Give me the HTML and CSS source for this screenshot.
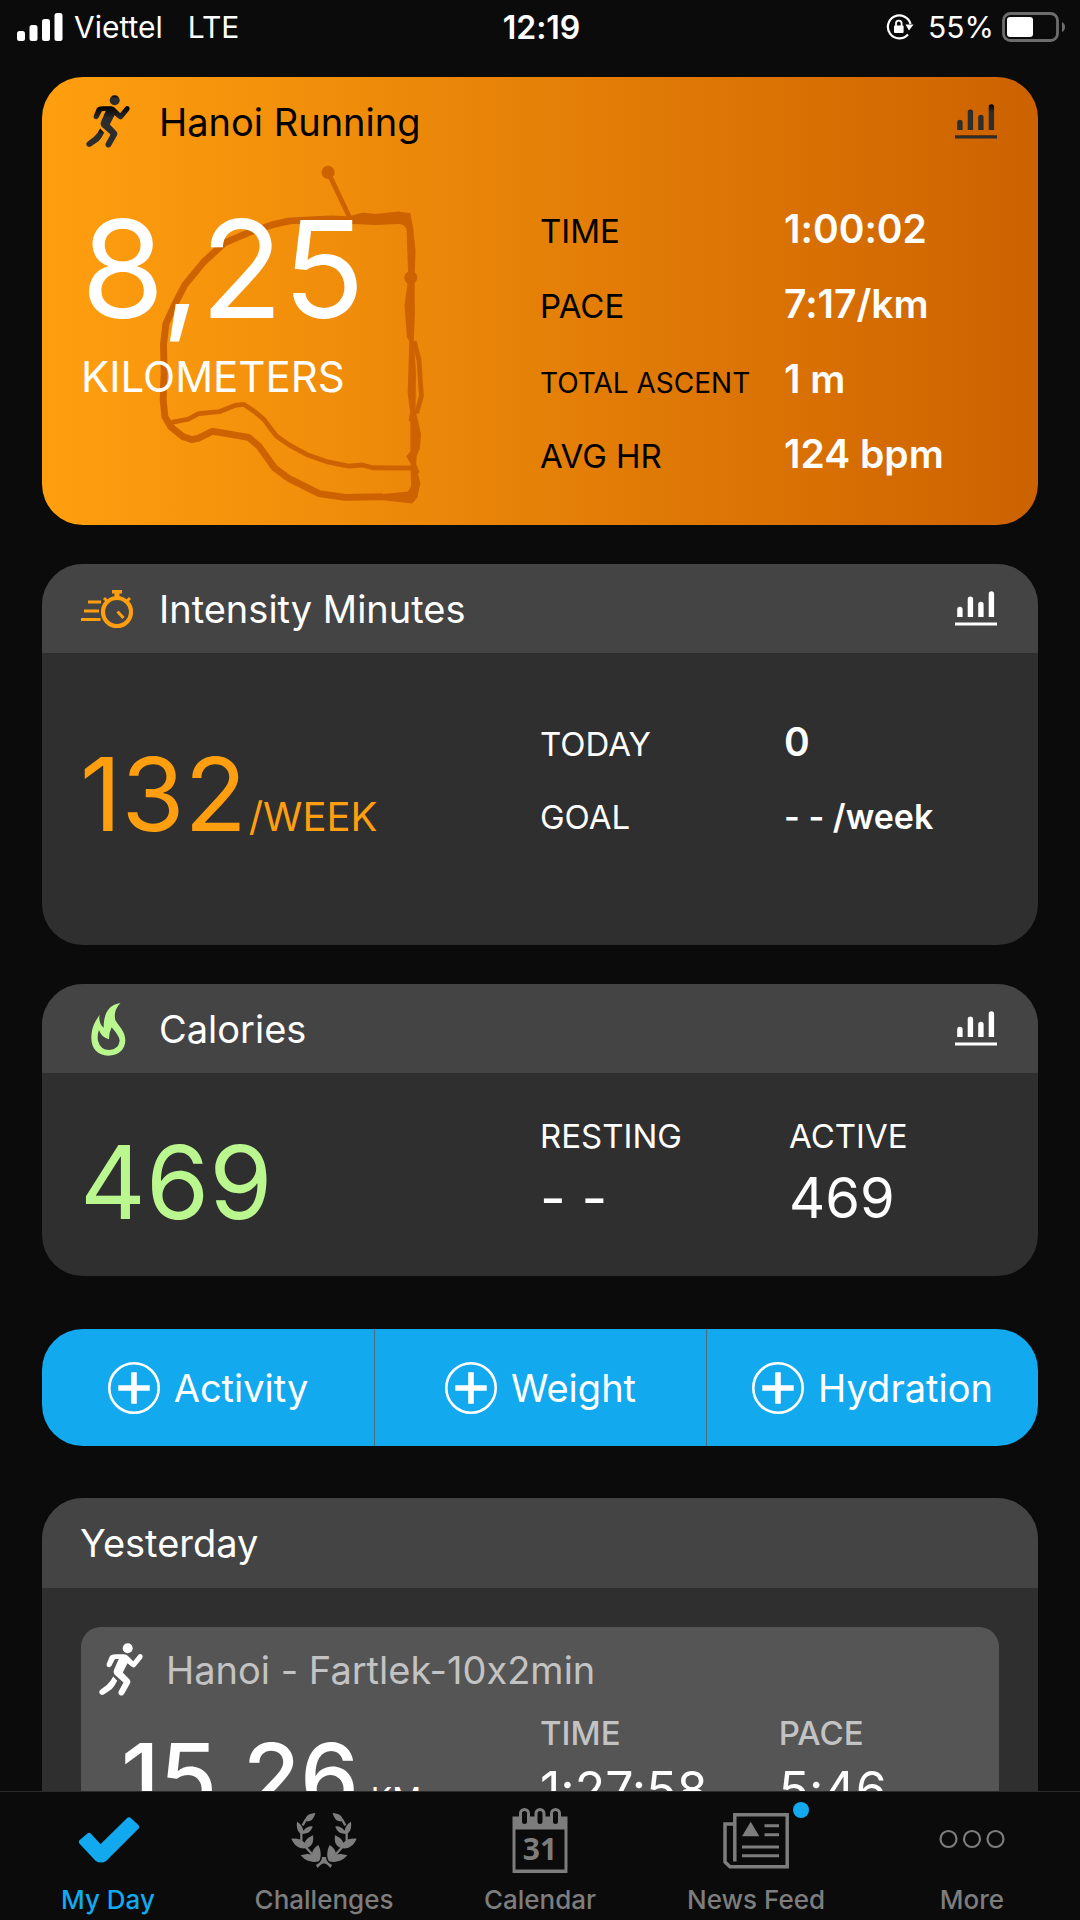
FILE: index.html
```html
<!DOCTYPE html>
<html lang="en">
<head>
<meta charset="utf-8">
<meta name="viewport" content="width=device-width, initial-scale=1">
<title>My Day</title>
<link rel="stylesheet" href="styles.css">
</head>
<body>
<svg class="defs" aria-hidden="true">
  <defs>
    <linearGradient id="ink" x1="0" y1="0" x2="0" y2="1">
      <stop offset="0" stop-color="#000"/>
      <stop offset=".3" stop-color="#2d2d2d"/>
      <stop offset="1" stop-color="#2d2d2d"/>
    </linearGradient>
    <symbol id="runner" viewBox="0 0 60 63">
      <circle cx="34.7" cy="10.3" r="5"/>
      <path d="M18 17.2Q20 16 25 16.2L31 16.2Q33.500 16.500 35 18L40.200 23.200L45.300 17Q47 15.300 49 16.800Q50.400 18.300 49.200 20.200L42.500 28.500Q40.500 30.300 38.400 28.600L34.500 25.300L29.800 34.500L36.500 41.500Q37.800 43 37.200 45L31 56Q29.500 58.300 27 57.200Q24.800 56 25.700 53.300L30.500 44.500L21.500 36.500Q19.800 34.300 21 31.800L25.800 20.800L21.800 21.200L18.500 27.800Q17.200 29.800 15.200 29Q13 28 13.800 25.500L16.500 19Q17 17.800 18 17.200Z"/>
      <path d="M20.200 38.500L24.200 42.800Q21.500 48.500 18.500 51.200L10.800 56.500Q8.300 57.800 6.600 55.600Q5.400 53.300 7.500 51.700L13.800 47Q18 43 20.200 38.500Z"/>
    </symbol>
    <symbol id="bars" viewBox="0 0 42 35">
      <path d="M2.200 26V18.500a2.700 2.700 0 0 1 5.400 0V26zM12.700 26V8.200a2.700 2.700 0 0 1 5.400 0V26zM23.200 26V13.500a2.700 2.700 0 0 1 5.400 0V26zM33.700 26V3a2.700 2.700 0 0 1 5.400 0V26z"/>
      <path class="bars-axis" d="M0 31.500h42v3H0z"/>
    </symbol>
    <symbol id="plus" viewBox="0 0 52 52">
      <circle cx="26" cy="26" r="24.700" fill="none" stroke="currentColor" stroke-width="2.600"/>
      <path d="M10.300 26h31.400M26 10.300v31.400" stroke="currentColor" stroke-width="5.600"/>
    </symbol>
    <g id="branch">
      <path d="M108-3C90-2 78 5 77 20C90 26 103 18 108-3Z"/>
      <path d="M53 23C50 45 58 58 68 60C88 60 97 50 100 37C88 36 78 42 72 50C70 38 65 30 53 23Z"/>
      <path d="M36 74C45 95 60 105 78 103C98 100 104 85 101 64C88 70 80 75 76 86C65 76 55 72 36 74Z"/>
      <path d="M64 124C75 138 95 148 119 142C128 128 124 105 117 93C105 100 98 110 98 122C88 118 78 120 64 124Z"/>
      <path d="M80 16L70 34M66 56V80M78 98L100 122" fill="none" stroke="currentColor" stroke-width="7"/>
      <path d="M128 129H134.500V148C124 150 120 158 114 162L110 152C119 148 127 143 128 129Z"/>
    </g>
  </defs>
</svg>

<header class="status">
  <div class="status-left">
    <svg class="signal" viewBox="0 0 46 28" aria-hidden="true"><rect x="0" y="18" width="8" height="10" rx="2.500"/><rect x="12.500" y="12" width="8" height="16" rx="2.500"/><rect x="25" y="6" width="8" height="22" rx="2.500"/><rect x="37.500" y="0" width="8" height="28" rx="2.500"/></svg>
    <span>Viettel</span>
    <span class="network">LTE</span>
  </div>
  <time class="clock">12:19</time>
  <div class="status-right">
    <svg class="lock" viewBox="0 0 28 26" aria-hidden="true">
      <path d="M24.500 10A11.500 11.500 0 1 0 22 20.500" fill="none" stroke="currentColor" stroke-width="2.200"/>
      <path d="M19.500 10.500h8l-4.500 6z"/>
      <rect x="8" y="11.500" width="9.600" height="7.500" rx="1"/>
      <path d="M10 12V9.500a2.800 2.800 0 0 1 5.600 0V12" fill="none" stroke="currentColor" stroke-width="1.800"/>
    </svg>
    <span>55%</span>
    <svg class="battery" viewBox="0 0 64 30" aria-hidden="true">
      <rect x="1.500" y="1.500" width="54" height="27" rx="7" fill="none" stroke="#6d6d6d" stroke-width="2.800"/>
      <rect x="5" y="5" width="26" height="20" rx="3"/>
      <path d="M60 10q3 1.500 3 5t-3 5z" fill="#6d6d6d"/>
    </svg>
  </div>
</header>

<main class="feed">
  <article class="card run-card">
    <svg class="route" viewBox="460 470 784 999" aria-hidden="true">
      <circle cx="951" cy="500" r="19"/>
      <circle cx="1191" cy="806" r="19"/>
      <path d="M951 500L1015 634" class="line thin"/>
      <path d="M1010 628L1052 617L1088 621L1155 614L1190 619L1198 660L1205 728L1202 806L1203 910L1200 990L1206 1080L1205 1190L1221 1260L1218 1300L1208 1325L1207 1350L1217 1370L1212 1375L1219 1403L1210 1445L1195 1462L1090 1450V1436L1183 1427L1192 1412L1190 1345L1178 1325L1190 1310V1225L1185 1220L1189 1195L1182 1140L1187 990L1180 980L1173 885L1184 806L1181 730L1179 665Q1172 650 1155 650L1088 653L1010 649Z"/>
      <path class="line" d="M1015 638L960 635L840 641L790 652L720 675L650 705L590 760L535 827L505 885L480 940L473 1000L475 1080L472 1160L477 1210L495 1240L530 1268L555 1276L575 1272L615 1252L640 1256L720 1270L750 1295L795 1358L835 1388L925 1433L1000 1444L1110 1442"/>
      <path class="line thin" d="M497 1226L545 1217L575 1201L635 1195L680 1177L707 1174L735 1193L765 1218L800 1265L840 1293L890 1320L950 1341L1010 1353L1050 1350L1080 1358L1210 1359"/>
      <path class="line thin" d="M1201 990L1215 1045L1222 1150L1208 1200"/>
    </svg>
    <header class="card-head">
      <svg class="card-icon" aria-hidden="true"><use href="#runner"/></svg>
      <h2>Hanoi Running</h2>
      <button class="chart" aria-label="Running charts"><svg aria-hidden="true"><use href="#bars"/></svg></button>
    </header>
    <div class="card-body">
      <div class="distance">
        <div class="huge">8,25</div>
        <div class="unit">KILOMETERS</div>
      </div>
      <dl class="stats">
        <dt>TIME</dt><dd>1:00:02</dd>
        <dt>PACE</dt><dd>7:17/km</dd>
        <dt class="small">TOTAL ASCENT</dt><dd>1 m</dd>
        <dt>AVG HR</dt><dd>124 bpm</dd>
      </dl>
    </div>
  </article>

  <article class="card intensity-card">
    <header class="card-head">
      <svg class="card-icon accent" viewBox="0 0 60 63" aria-hidden="true">
        <g fill="none" stroke="currentColor">
          <circle cx="37" cy="35" r="14" stroke-width="4.200"/>
          <path d="M8 25h13M4 34h15M1 42.500h19.500" stroke-width="3"/>
          <path d="M37.500 34.500l6 6.500M24 21l4 4M50 21l-4 4" stroke-width="3"/>
        </g>
        <path d="M32 13h10v3.500h-2.500V21h-5v-4.500H32z"/>
      </svg>
      <h2>Intensity Minutes</h2>
      <button class="chart" aria-label="Intensity charts"><svg aria-hidden="true"><use href="#bars"/></svg></button>
    </header>
    <div class="card-body">
      <div class="figure accent">132<span class="per">/WEEK</span></div>
      <dl class="stats">
        <dt>TODAY</dt><dd>0</dd>
        <dt>GOAL</dt><dd class="goal">- - /week</dd>
      </dl>
    </div>
  </article>

  <article class="card calories-card">
    <header class="card-head">
      <svg class="card-icon green" viewBox="15 6 180 189" aria-hidden="true">
        <path fill-rule="evenodd" d="M137 24C118 42 118 62 121 76C132 94 151 110 151 136C151 164 130 182 100 182C68 182 49 160 49 130C49 98 60 80 74 59C70 76 77 90 86 98C86 60 97 30 137 24ZM72 105Q66 120 69 137Q76 165 103 165Q131 163 134 137Q134 125 110 97Q102 112 102 133Q78 126 72 105Z"/>
      </svg>
      <h2>Calories</h2>
      <button class="chart" aria-label="Calorie charts"><svg aria-hidden="true"><use href="#bars"/></svg></button>
    </header>
    <div class="card-body">
      <div class="figure green">469</div>
      <dl class="pair">
        <div><dt>RESTING</dt><dd>- -</dd></div>
        <div><dt>ACTIVE</dt><dd>469</dd></div>
      </dl>
    </div>
  </article>

  <div class="actions">
    <button><svg aria-hidden="true"><use href="#plus"/></svg>Activity</button>
    <button><svg aria-hidden="true"><use href="#plus"/></svg>Weight</button>
    <button><svg aria-hidden="true"><use href="#plus"/></svg>Hydration</button>
  </div>

  <section class="card yesterday-card">
    <header class="card-head"><h2>Yesterday</h2></header>
    <article class="entry">
      <header class="entry-head">
        <svg class="card-icon" aria-hidden="true"><use href="#runner"/></svg>
        <h3>Hanoi - Fartlek-10x2min</h3>
      </header>
      <div class="entry-body">
        <div class="entry-distance">15,26<span>KM</span></div>
        <dl class="pair">
          <div><dt>TIME</dt><dd>1:27:58</dd></div>
          <div><dt>PACE</dt><dd>5:46</dd></div>
        </dl>
      </div>
    </article>
  </section>
</main>

<nav class="tabs">
  <a href="#" class="active" aria-current="page">
    <svg viewBox="0 0 66 65" aria-hidden="true"><path d="M7 34L14 28L25.500 40.500L54 12.500L61 19L30 50Q26 53 22 50Z" stroke="currentColor" stroke-width="6" stroke-linejoin="round"/></svg>
    My Day
  </a>
  <a href="#">
    <svg viewBox="35 -18 198 195" aria-hidden="true"><use href="#branch"/><use href="#branch" transform="matrix(-1 0 0 1 268 0)"/></svg>
    Challenges
  </a>
  <a href="#">
    <svg viewBox="0 0 66 65" aria-hidden="true">
      <path d="M5.500 8.500h55V65h-55zM8.500 21.500V61.500h49V21.500z" fill-rule="evenodd"/>
      <g class="rings"><rect x="13.500" y="1.500" width="8" height="16" rx="4"/><rect x="29" y="1.500" width="8" height="16" rx="4"/><rect x="44.500" y="1.500" width="8" height="16" rx="4"/></g>
      <text x="33" y="52" text-anchor="middle">31</text>
    </svg>
    Calendar
  </a>
  <a href="#" class="has-badge">
    <svg viewBox="0 0 66 65" aria-hidden="true">
      <path d="M11.800 53.500V6.700H64.200V58.800H7L2 54V16H11" fill="none" stroke="currentColor" stroke-width="3.500"/>
      <path d="M19 28.200L27.700 13.700L36.300 28.200z"/>
      <path d="M41.500 17.700H56M41.500 26.700H56M19 39H56M19 47.700H56" stroke="currentColor" stroke-width="3"/>
    </svg>
    News Feed
  </a>
  <a href="#">
    <svg viewBox="0 0 66 65" aria-hidden="true"><g fill="none" stroke="currentColor" stroke-width="2.200"><circle cx="9.500" cy="31" r="8"/><circle cx="33" cy="31" r="8"/><circle cx="56.500" cy="31" r="8"/></g></svg>
    More
  </a>
</nav>
</body>
</html>
```
FILE: styles.css
```css
:root {
  --page: #0b0b0b;
  --head: #444;
  --body: #2f2f2f;
  --entry: #555;
  --orange: #ff9f0f;
  --rust: #cc6200;
  --green: #bbf78f;
  --blue: #12a9ef;
  --muted: #7d7d7d;
}

* {
  box-sizing: border-box;
}

body {
  margin: 0;
  height: 100vh;
  display: flex;
  flex-direction: column;
  overflow: hidden;
  background: var(--page);
  color: #fff;
  font-family: Inter, "Liberation Sans", sans-serif;
  font-variant-ligatures: no-contextual;
}

h2,
h3,
dl,
dd {
  margin: 0;
}

svg {
  display: block;
  fill: currentColor;
}

button {
  border: 0;
  padding: 0;
  background: none;
  color: inherit;
  font: inherit;
}

.defs {
  position: absolute;
  width: 0;
  height: 0;
}

/* Status bar */
.status {
  flex: none;
  display: grid;
  grid-template-columns: 1fr auto 1fr;
  align-items: center;
  height: 54px;
  padding: 0 14px 0 17px;
  font-size: 30px;
}

.status-left,
.status-right {
  display: flex;
  align-items: center;
}

.status-left {
  gap: 11px;
}

.status-right {
  justify-content: flex-end;
  gap: 8px;
}

.signal {
  width: 46px;
  height: 28px;
}

.network {
  margin-left: 14px;
}

.clock {
  font-size: 32px;
  font-weight: 600;
}

.lock {
  width: 28px;
  height: 26px;
  margin-right: 6px;
}

.battery {
  width: 64px;
  height: 30px;
}

/* Feed */
.feed {
  flex: 1;
  min-height: 0;
  overflow-y: auto;
  scrollbar-width: none;
  padding: 23px 42px 40px;
}

.card {
  overflow: hidden;
  margin-bottom: 39px;
  border-radius: 41px;
  background: var(--body);
}

.card-head {
  display: flex;
  align-items: center;
  height: 89px;
  padding: 0 41px 0 38px;
  background: var(--head);
}

.card-head h2,
.entry-head h3 {
  font-size: 38px;
  font-weight: 400;
  line-height: 46px;
}

.card-icon {
  flex: none;
  width: 60px;
  height: 63px;
  margin-right: 19px;
}

.chart {
  margin-left: auto;
}

.chart svg {
  width: 42px;
  height: 35px;
}

.card-body {
  display: grid;
  grid-template-columns: 1fr 1fr;
}

.accent {
  color: var(--orange);
}

.green {
  color: var(--green);
}

.stats {
  display: grid;
  grid-template-columns: 49% 51%;
  grid-auto-rows: 75px;
  align-items: baseline;
}

.stats dt,
.pair dt {
  font-size: 33px;
}

.stats dt.small {
  font-size: 28px;
}

.stats dd {
  font-size: 39px;
  font-weight: 600;
  line-height: 75px;
}

.stats dd.goal {
  font-size: 34px;
}

.figure {
  padding-left: 38px;
  font-size: 102px;
  line-height: 110px;
}

.unit {
  font-size: 42px;
  line-height: 50px;
}

.per {
  margin-left: 2px;
  font-size: 40px;
}

/* Running card */
.run-card {
  position: relative;
  background: linear-gradient(90deg, var(--orange), var(--rust));
}

.run-card .card-head {
  background: none;
  color: #000;
}

.run-card .card-head svg {
  fill: url(#ink);
}

.run-card .stats dt {
  color: #000;
}

.run-card .card-head,
.run-card .card-body {
  position: relative;
}

.run-card .stats {
  padding: 25px 0 34px;
}

.distance {
  padding: 33px 0 0 39px;
}

.huge {
  margin-bottom: 13px;
  font-size: 135px;
  line-height: 140px;
}

.route {
  position: absolute;
  left: 117px;
  top: 85px;
  width: 270px;
  height: 344px;
  fill: var(--rust);
}

.route .line {
  fill: none;
  stroke: var(--rust);
  stroke-width: 20;
  stroke-linejoin: round;
}

.route .thin {
  stroke-width: 14;
}

/* Intensity card */
.intensity-card .figure {
  padding-top: 86px;
}

.intensity-card .stats {
  padding: 51px 0 91px;
}

/* Calories card */
.calories-card {
  margin-bottom: 53px;
}

.calories-card .figure {
  padding-top: 54px;
}

.pair {
  display: grid;
  grid-template-columns: 1fr 1fr;
}

.pair dt {
  line-height: 40px;
}

.pair dd {
  line-height: 60px;
}

.calories-card .pair {
  padding: 43px 0 48px;
}

.calories-card .pair dd {
  margin-top: 12px;
  font-size: 56px;
}

/* Quick actions */
.actions {
  display: grid;
  grid-template-columns: repeat(3, 1fr);
  overflow: hidden;
  margin-bottom: 52px;
  border-radius: 41px;
  background: var(--blue);
}

.actions button {
  display: flex;
  align-items: center;
  justify-content: center;
  gap: 14px;
  height: 117px;
  font-size: 38px;
}

.actions button + button {
  border-left: 1px solid #4c6b7d;
}

.actions svg {
  width: 52px;
  height: 52px;
}

/* Yesterday */
.yesterday-card .card-head {
  height: 90px;
}

.entry {
  margin: 39px;
  padding: 11px 0 30px;
  border-radius: 20px;
  background: var(--entry);
}

.entry-head {
  display: flex;
  align-items: center;
  padding-left: 12px;
}

.entry-head .card-icon {
  margin-right: 13px;
}

.entry-head h3,
.entry dt {
  color: #c3c3c3;
}

.entry-body {
  display: grid;
  grid-template-columns: 1fr 1fr;
}

.entry-distance {
  padding: 21px 0 0 40px;
  font-size: 93px;
  font-weight: 500;
  line-height: 110px;
  white-space: nowrap;
}

.entry-distance span {
  margin-left: 12px;
  font-size: 32px;
  font-weight: 400;
}

.entry .pair {
  grid-template-columns: 52% 48%;
  padding-top: 12px;
}

.entry .pair dt {
  font-weight: 500;
}

.entry .pair dd {
  margin-top: 7px;
  font-size: 50px;
}

/* Tab bar */
.tabs {
  flex: none;
  display: grid;
  grid-template-columns: repeat(5, 1fr);
  border-top: 1px solid #2a2a2a;
  background: var(--page);
}

.tabs a {
  position: relative;
  display: flex;
  flex-direction: column;
  align-items: center;
  gap: 11px;
  padding: 16px 0 4px;
  color: var(--muted);
  font-size: 26px;
  font-weight: 500;
  line-height: 32px;
  text-decoration: none;
}

.tabs a.active {
  color: var(--blue);
}

.tabs svg {
  width: 66px;
  height: 65px;
}

.tabs .rings {
  fill: var(--page);
  stroke: var(--muted);
  stroke-width: 3;
}

.tabs text {
  font: 700 30px "Open Sans", "Noto Sans", sans-serif;
}

.has-badge::after {
  content: "";
  position: absolute;
  left: calc(50% + 37px);
  top: 10px;
  width: 16px;
  height: 16px;
  border-radius: 50%;
  background: var(--blue);
}
```
